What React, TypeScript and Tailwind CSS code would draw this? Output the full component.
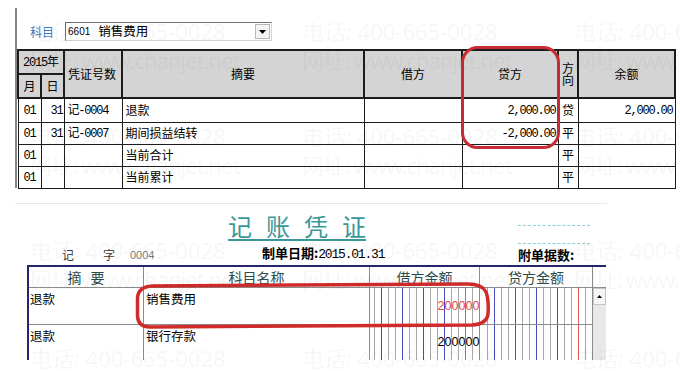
import React from 'react';

const th = 'border-2 border-[#1c1c1c] bg-[#d4d4d4] p-0 font-normal';
const td = 'border border-[#1c1c1c] p-0';
const mono = "font-['Liberation_Mono','Noto_Sans_CJK_SC',monospace] tracking-[-1.2px]";

const rows = [
  { m: '01', d: '31', no: '记-0004', text: '退款', cr: '2,000.00', dir: '贷', bal: '2,000.00', h: 'h-[24px]' },
  { m: '01', d: '31', no: '记-0007', text: '期间损益结转', cr: '-2,000.00', dir: '平', bal: '', h: 'h-[22px]' },
  { m: '01', d: '', no: '', text: '当前合计', cr: '', dir: '平', bal: '', h: 'h-[22px]' },
  { m: '01', d: '', no: '', text: '当前累计', cr: '', dir: '平', bal: '', h: 'h-[22px]' },
];

function LedgerPanel() {
  return (
    <div className="h-[190px] pt-[8px]">
      <div className="ml-[15px] h-[180px] border-l-2 border-[#858585] pt-[14px]">
        <div className="flex h-[19px] items-center">
          <span className="ml-[13px] text-[12px] leading-none text-[#3f80c8]">科目</span>
          <div className="ml-[11px] flex h-[19px] w-[207px] items-center border border-b-[#d4d4d4] border-l-[#707070] border-r-[#d4d4d4] border-t-[#707070] bg-white">
            <span className="ml-[2px] font-['Liberation_Sans',sans-serif] text-[10px] leading-none">6601</span>
            <span className="ml-[8px] text-[12.5px] leading-none">销售费用</span>
            <div className="ml-auto mr-[1px] flex h-[15px] w-[15px] items-center justify-center border border-[#b8b8b8] bg-[#f4f4f4]">
              <svg width="7" height="4" viewBox="0 0 7 4">
                <path d="M0 0h7L3.5 4z" fill="#000" />
              </svg>
            </div>
          </div>
        </div>

        <table className="mt-[8px] w-[657px] table-fixed border-collapse text-[12px] leading-none">
          <colgroup>
            <col className="w-[23px]" />
            <col className="w-[23px]" />
            <col className="w-[58px]" />
            <col className="w-[242px]" />
            <col className="w-[98px]" />
            <col className="w-[96px]" />
            <col className="w-[20px]" />
            <col className="w-[97px]" />
          </colgroup>
          <thead>
            <tr className="h-[24px]">
              <th colSpan={2} className={th}>
                <span className={mono}>2015</span>年
              </th>
              <th rowSpan={2} className={`${th} pl-[3px] text-left`}>
                凭证号数
              </th>
              <th rowSpan={2} className={th}>
                摘要
              </th>
              <th rowSpan={2} className={th}>
                借方
              </th>
              <th rowSpan={2} className={th}>
                贷方
              </th>
              <th rowSpan={2} className={th}>
                <div className="flex flex-col items-center leading-[12px]">
                  <span>方</span>
                  <span>向</span>
                </div>
              </th>
              <th rowSpan={2} className={th}>
                余额
              </th>
            </tr>
            <tr className="h-[24px]">
              <th className={th}>月</th>
              <th className={th}>日</th>
            </tr>
          </thead>
          <tbody>
            {rows.map((r, i) => (
              <tr key={i} className={r.h}>
                <td className={`${td} text-center`}>
                  <span className={mono}>{r.m}</span>
                </td>
                <td className={`${td} pr-[1px] text-right`}>
                  <span className={mono}>{r.d}</span>
                </td>
                <td className={`${td} pl-[3px]`}>
                  <span className={mono}>{r.no}</span>
                </td>
                <td className={`${td} pl-[3px]`}>{r.text}</td>
                <td className={td} />
                <td className={`${td} pr-[2px] text-right`}>
                  <span className={mono}>{r.cr}</span>
                </td>
                <td className={`${td} text-center`}>{r.dir}</td>
                <td className={`${td} pr-[2px] text-right`}>
                  <span className={mono}>{r.bal}</span>
                </td>
              </tr>
            ))}
          </tbody>
        </table>
      </div>
    </div>
  );
}

const lineColor = (j: number) =>
  j === 2 ? 'border-[#e25a5a]' : [5, 8, 11, 14].includes(j) ? 'border-[#4a4ab8]' : 'border-[#a8a8a8]';

function DigitCells({ value = '', tone = 'text-black' }: { value?: string; tone?: string }) {
  const padded = value.padStart(15, ' ');
  return (
    <div className="flex h-full justify-end">
      {padded.split('').map((ch, i) => {
        const j = 15 - i;
        return (
          <div
            key={j}
            className={`flex h-full w-[7px] shrink-0 items-center justify-center border-l font-['Liberation_Sans',sans-serif] text-[12.5px] leading-none ${tone} ${lineColor(j)}`}
          >
            {ch.trim()}
          </div>
        );
      })}
    </div>
  );
}

function VoucherPanel() {
  return (
    <div className="h-[181px]">
      <div className="ml-[15px] mt-[13px] h-px w-[592px] bg-[#e8e8e8]" />

      <div className="flex h-[38px] items-start">
        <div className="ml-[228px] mt-[10px] flex gap-[14px] border-b-2 border-[#3a9898] pb-px text-[24px] leading-none text-[#3a9898]">
          <span>记</span>
          <span>账</span>
          <span>凭</span>
          <span>证</span>
        </div>
        <div className="ml-[152px] mt-[21px] w-[72px] border-t border-dashed border-[#86d2d6]" />
      </div>

      <div className="flex h-[23px] items-end pb-[3px] leading-[14px]">
        <span className="ml-[62px] w-[41px] text-[12px] text-[#3a3a3a]">记</span>
        <span className="w-[27px] text-[12px] text-[#3a3a3a]">字</span>
        <span className="w-[132px] font-['Liberation_Sans',sans-serif] text-[11px] text-[#7a7a7a]">0004</span>
        <span className="w-[256px] text-[13px] font-bold">
          制单日期:<span className={`${mono} font-normal`}>2015.01.31</span>
        </span>
        <div className="flex flex-col">
          <div className="mb-[4px] w-[72px] border-t border-dashed border-[#86d2d6]" />
          <span className="text-[13px] font-bold">附单据数:</span>
        </div>
      </div>

      <div className="ml-[27px] w-[579px] border-l-2 border-t-2 border-[#25256e]">
        <div className="flex h-[21px] border-b border-[#8c8c8c] text-[14px] leading-none text-[#2c4c4c]">
          <div className="flex w-[115px] items-center justify-center gap-[9px] border-r border-[#8c8c8c]">
            <span>摘</span>
            <span>要</span>
          </div>
          <div className="flex w-[226px] items-center justify-center border-r border-[#8c8c8c]">科目名称</div>
          <div className="flex w-[110px] items-center justify-center border-r border-[#8c8c8c]">借方金额</div>
          <div className="flex w-[113px] items-center justify-center border-r border-[#8c8c8c]">贷方金额</div>
          <div className="w-[13px]" />
        </div>

        <div className="flex">
          <div className="flex flex-col text-[12.5px] leading-none">
            <div className="flex h-[37px] border-b border-[#8c8c8c]">
              <div className="w-[115px] border-r border-[#8c8c8c] pl-px pt-[5px]">退款</div>
              <div className="w-[226px] border-r border-[#8c8c8c] pl-[2px] pt-[5px]">销售费用</div>
              <div className="w-[110px] border-r border-[#8c8c8c]">
                <DigitCells value="200000" tone="text-[#e04848]" />
              </div>
              <div className="w-[113px] border-r border-[#8c8c8c]">
                <DigitCells />
              </div>
            </div>
            <div className="flex h-[35px]">
              <div className="w-[115px] border-r border-[#8c8c8c] pl-px pt-[5px]">退款</div>
              <div className="w-[226px] border-r border-[#8c8c8c] pl-[2px] pt-[5px]">银行存款</div>
              <div className="w-[110px] border-r border-[#8c8c8c]">
                <DigitCells value="200000" />
              </div>
              <div className="w-[113px] border-r border-[#8c8c8c]">
                <DigitCells />
              </div>
            </div>
          </div>
          <div className="flex w-[13px] flex-col bg-[#e8e8e8]">
            <div className="flex h-[17px] items-center justify-center border border-[#c4c4c4] bg-[#f6f6f6]">
              <svg width="5" height="3" viewBox="0 0 5 3">
                <path d="M0 3h5L2.5 0z" fill="#000" />
              </svg>
            </div>
          </div>
        </div>
      </div>
    </div>
  );
}

function Annotations() {
  return (
    <svg className="pointer-events-none absolute left-0 top-0" width="680" height="371" viewBox="0 0 680 371">
      <rect x="462.5" y="47.5" width="96" height="100" rx="15" fill="none" stroke="#c72c35" strokeWidth="3" />
      <path
        d="M152 286 L468 284 Q482 284 486 292 Q489 300 488 314 Q487 324 472 325 L150 327 Q138 327 137.5 316 L137.5 298 Q138 287 152 286 Z"
        fill="none"
        stroke="#d02a2a"
        strokeWidth="3.5"
      />
    </svg>
  );
}

const marks = [
  { cls: 'left-[30px] top-[16px]', t: '电话: 400-665-0028' },
  { cls: 'left-[302px] top-[16px]', t: '电话: 400-665-0028' },
  { cls: 'left-[574px] top-[16px]', t: '电话: 400-665-0028' },
  { cls: 'left-[30px] top-[45px] tracking-[-1px]', t: '网址: www.chanjet.net' },
  { cls: 'left-[302px] top-[45px] tracking-[-1px]', t: '网址: www.chanjet.net' },
  { cls: 'left-[574px] top-[45px] tracking-[-1px]', t: '网址: www.chanjet.net' },
  { cls: 'left-[30px] top-[121px]', t: '电话: 400-665-0028' },
  { cls: 'left-[302px] top-[121px]', t: '电话: 400-665-0028' },
  { cls: 'left-[574px] top-[121px]', t: '电话: 400-665-0028' },
  { cls: 'left-[30px] top-[150px] tracking-[-1px]', t: '网址: www.chanjet.net' },
  { cls: 'left-[302px] top-[150px] tracking-[-1px]', t: '网址: www.chanjet.net' },
  { cls: 'left-[574px] top-[150px] tracking-[-1px]', t: '网址: www.chanjet.net' },
  { cls: 'left-[30px] top-[235px]', t: '电话: 400-665-0028' },
  { cls: 'left-[302px] top-[235px]', t: '电话: 400-665-0028' },
  { cls: 'left-[574px] top-[235px]', t: '电话: 400-665-0028' },
  { cls: 'left-[30px] top-[264px] tracking-[-1px]', t: '网址: www.chanjet.net' },
  { cls: 'left-[302px] top-[264px] tracking-[-1px]', t: '网址: www.chanjet.net' },
  { cls: 'left-[574px] top-[264px] tracking-[-1px]', t: '网址: www.chanjet.net' },
  { cls: 'left-[30px] top-[343px]', t: '电话: 400-665-0028' },
  { cls: 'left-[302px] top-[343px]', t: '电话: 400-665-0028' },
  { cls: 'left-[574px] top-[343px]', t: '电话: 400-665-0028' },
];

function Watermark() {
  return (
    <div className="pointer-events-none absolute inset-0 font-['Noto_Sans','Noto_Sans_CJK_SC',sans-serif] text-[22px] leading-[30px] text-black/[0.055]">
      {marks.map((m, i) => (
        <span key={i} className={`absolute whitespace-nowrap ${m.cls}`}>
          {m.t}
        </span>
      ))}
    </div>
  );
}

export default function App() {
  return (
    <div className="relative h-[371px] w-[680px] overflow-hidden bg-white font-['Noto_Sans_CJK_SC',sans-serif] text-black">
      <LedgerPanel />
      <VoucherPanel />
      <Annotations />
      <Watermark />
    </div>
  );
}
